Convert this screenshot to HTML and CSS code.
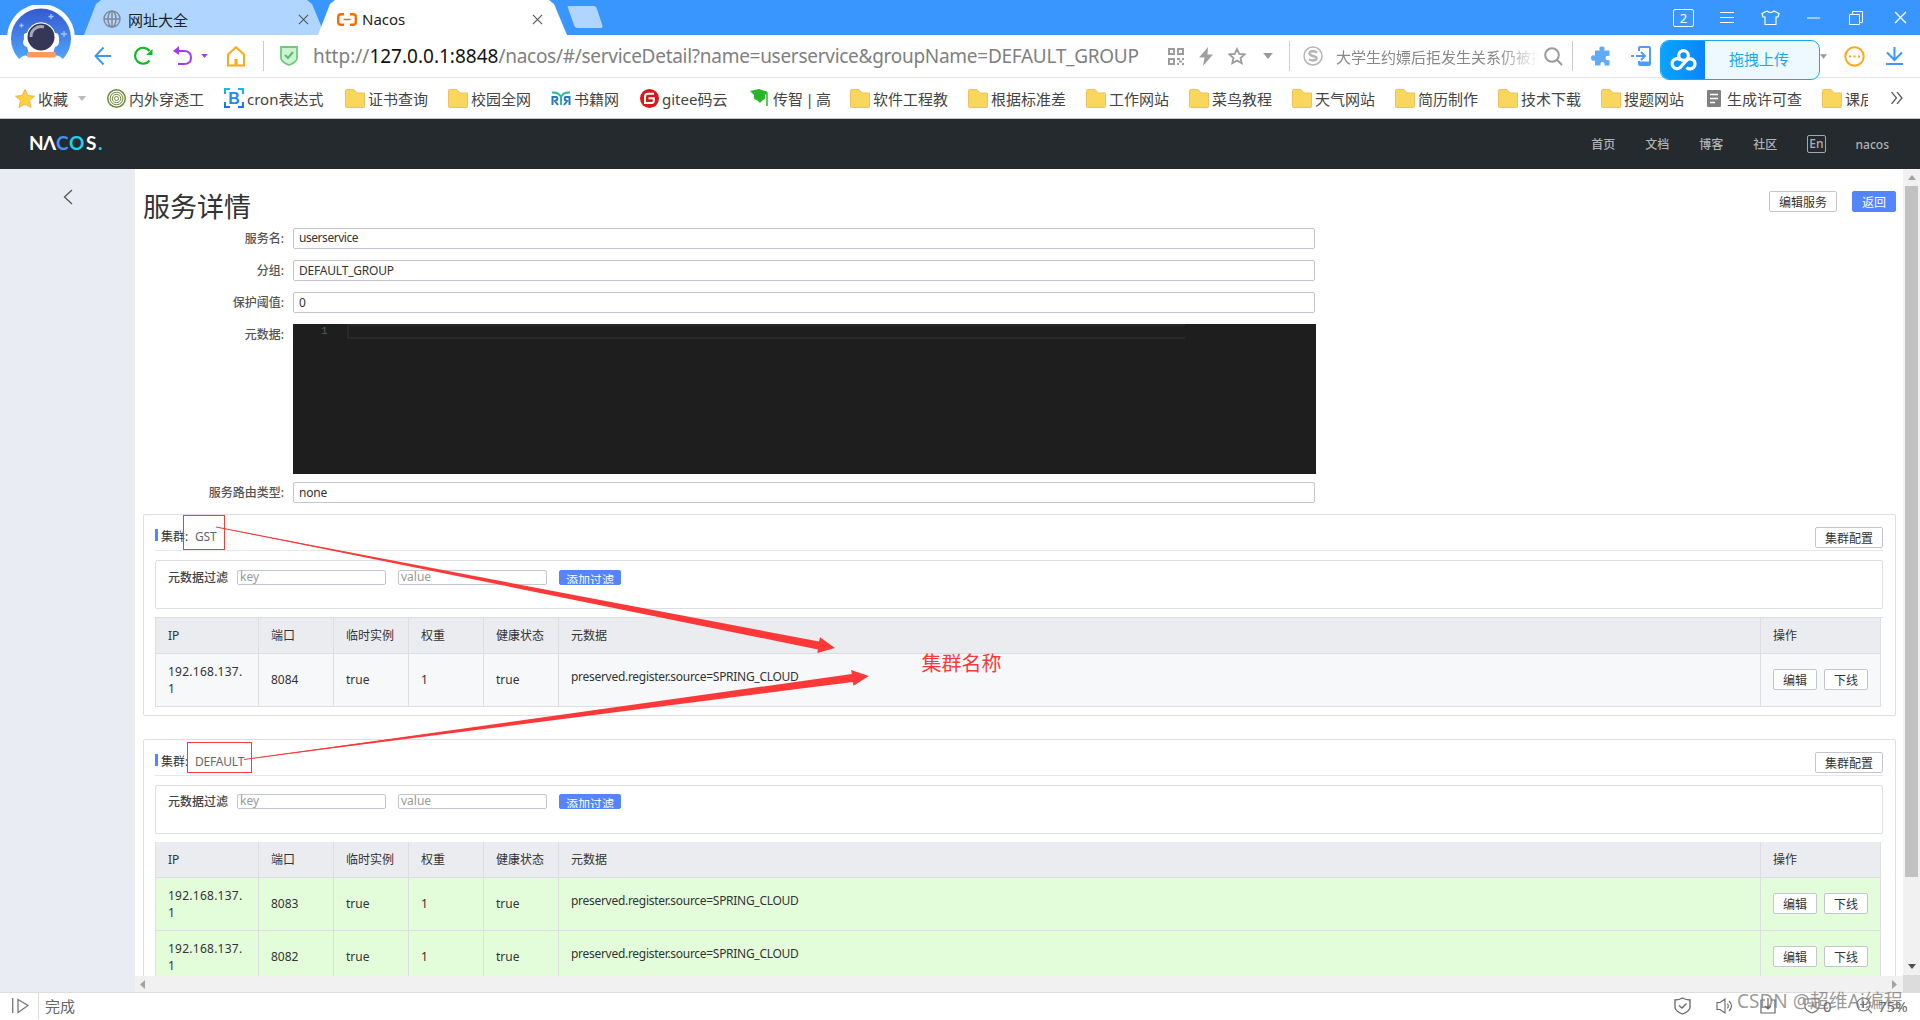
FILE: index.html
```
<!DOCTYPE html>
<html lang="zh">
<head>
    <meta charset="UTF-8">
    <title>Nacos</title>
    <link rel="stylesheet" href="styles.css">
</head>
<body>
    <svg class="defs" width="0" height="0">
        <defs>
            <symbol id="folder" viewBox="0 0 20 19"><path d="M.5 1.5Q.5.5 1.5.5H9l3 3.500H19.500V17.500Q19.500 18.500 18.500 18.500H1.500Q.5 18.500 .5 17.500Z" fill="#f9d65c" stroke="#f3bd62"/></symbol>
            <symbol id="caret" viewBox="0 0 8 5"><path d="M0 0H8L4 5Z" fill="currentColor"/></symbol>
            <symbol id="cross" viewBox="0 0 12 12"><path d="M1 1L11 11M11 1L1 11" stroke="currentColor" stroke-width="1.200" fill="none"/></symbol>
            <linearGradient id="sky" x1="0" y1="0" x2="0" y2="1"><stop offset="0" stop-color="#3558cf"/><stop offset="1" stop-color="#4ea6fb"/></linearGradient>
            <linearGradient id="cronBlue" x1="0" y1="0" x2="0" y2="1"><stop offset="0" stop-color="#19b9f5"/><stop offset="1" stop-color="#1672f0"/></linearGradient>
        </defs>
    </svg>

    <!-- browser chrome -->
    <div class="titlebar">
        <div class="tab">
            <svg width="18" height="18" viewBox="0 0 18 18" fill="none" stroke="#7f8b97" stroke-width="1.500"><circle cx="9" cy="9" r="8"/><ellipse cx="9" cy="9" rx="4" ry="8"/><path d="M9 1V17M1 9H17"/></svg>
            <span>网址大全</span>
            <svg class="close" width="11" height="11"><use href="#cross"/></svg>
        </div>
        <div class="tab active">
            <svg width="20" height="13" viewBox="0 0 20 13" fill="none" stroke="#ff6a00" stroke-width="2.400"><path d="M7 1.200H4Q1.200 1.200 1.200 4V9Q1.200 11.800 4 11.800H7M13 1.200H16Q18.800 1.200 18.800 4V9Q18.800 11.800 16 11.800H13"/><path d="M6.500 6.500H13.500" stroke-width="1.600"/></svg>
            <span>Nacos</span>
            <svg class="close" width="11" height="11"><use href="#cross"/></svg>
        </div>
        <svg class="newtab" width="37" height="23" viewBox="0 0 37 23"><path d="M2 0H27Q29 0 30 3L35.500 20Q36 22 34 22H10Q8 22 7 19L1 2Q0 0 2 0Z" fill="#b0d6ff"/></svg>
        <div class="winbtns">
            <span class="count">2</span>
            <svg width="14" height="12" viewBox="0 0 14 12" stroke="#fff"><path d="M0 .5H14M0 5.500H14M0 10.500H14"/></svg>
            <svg width="19" height="16" viewBox="0 0 19 16" fill="none" stroke="#fff" stroke-width="1.200"><path d="M6 1Q9.500 4 13 1L18 3.500L17 7H15V14.500H4V7H2L1 3.500Z"/></svg>
            <svg width="13" height="2"><path d="M0 1H13" stroke="#fff"/></svg>
            <svg width="14" height="14" viewBox="0 0 14 14" fill="none" stroke="#fff"><path d="M.5 3.500H10.500V13.500H.5ZM3.500 3V.5H13.500V11.500H11"/></svg>
            <svg class="white" width="13" height="13"><use href="#cross"/></svg>
        </div>
    </div>

    <svg class="avatar" width="68" height="60" viewBox="0 0 68 60">
        <path d="M9 56A34 34 0 1 1 59 56Z" fill="#fff"/>
        <path d="M12 54A30 30 0 1 1 56 54Q50 48 46 52H22Q18 48 12 54Z" fill="url(#sky)"/>
        <path d="M17 34Q16 27 20 28A14.500 14.500 0 0 1 48 28Q52 27 52 34V37Q52 41 48 42L46 49H22L20 42Q16 41 16 37Z" fill="#fff"/>
        <circle cx="34" cy="32" r="13.500" fill="#343856"/>
        <path d="M24 32A10 10 0 0 1 37 22" fill="none" stroke="#a7a9bb" stroke-width="3"/>
        <rect x="20" y="47" width="29" height="5.500" rx="2" fill="#ff9a5c"/>
        <path d="M44 9V14M41.500 11.500H46.500M57 26V32M54 29H60M14.500 18.500V22.500M12.500 20.500H16.500" stroke="#a5c6ff" stroke-width="1.300"/>
    </svg>

    <div class="toolbar">
        <svg width="18" height="20" viewBox="0 0 18 20" fill="none" stroke="#3996ff" stroke-width="1.900"><path d="M17 10H1.500M9.500 1.500L1.500 10L9.500 18.500"/></svg>
        <svg width="20" height="20" viewBox="0 0 20 20" fill="none" stroke="#0bbd21" stroke-width="2.200"><path d="M16.500 14.500A8 8 0 1 1 16.500 5"/><path d="M19.500 3V9H13Z" fill="#0bbd21" stroke="none"/></svg>
        <svg width="20" height="20" viewBox="0 0 20 20" fill="none" stroke="#a33cf0" stroke-width="2"><path d="M5 5H11Q18 5 18 11.500Q18 18 11 18H5"/><path d="M0 5L6 0V9Z" fill="#a33cf0" stroke="none"/></svg>
        <svg class="purple" width="7" height="4"><use href="#caret"/></svg>
        <svg width="18" height="21" viewBox="0 0 18 21" fill="none" stroke="#ffa914" stroke-width="2"><path d="M1 8.500L9 1.200L17 8.500V19.500H1Z"/><path d="M9 13V20" stroke-width="3"/></svg>
        <i class="sep"></i>
        <svg width="18" height="20" viewBox="0 0 18 20"><path d="M1 1H17V12Q17 16 9 19Q1 16 1 12Z" fill="#ccf4d2" stroke="#70c97e" stroke-width="1.800"/><path d="M5 9L8 12L13 6" fill="none" stroke="#5dbb6c" stroke-width="2"/></svg>
        <div class="url">http://<b>127.0.0.1:8848</b><span>/nacos/#/serviceDetail?name=userservice&amp;groupName=DEFAULT_GROUP</span></div>
        <svg width="16" height="17" viewBox="0 0 16 17" fill="none" stroke="#9b9b9b" stroke-width="2"><path d="M1 1H6V6H1ZM10 1H15V6H10ZM1 11H6V16H1Z"/><path d="M9 11H12M14 11H16M11 13.500H14M9 16H11M14 16H16"/></svg>
        <svg width="14" height="19" viewBox="0 0 14 19"><path d="M9 0L0 10.500H5.500L4 19L14 7.500H8.500Z" fill="#a0a0a0"/></svg>
        <svg width="18" height="18" viewBox="0 0 18 18"><path d="M9 2L11.200 6.800L16.500 7.300L12.500 11L13.700 16.200L9 13.500L4.300 16.200L5.500 11L1.500 7.300L6.800 6.800Z" fill="none" stroke="#9b9b9b" stroke-width="1.800"/></svg>
        <svg class="grey" width="10" height="6"><use href="#caret"/></svg>
        <i class="sep"></i>
        <svg width="20" height="20" viewBox="0 0 20 20" fill="none" stroke="#b5b5b5"><circle cx="10" cy="10" r="9" stroke-width="1.500"/><path d="M14 6.500Q10 4 7 6Q5.500 9 10 10Q15 11 13 13.500Q10 15.500 6 13.500" stroke-width="2.500"/></svg>
        <div class="query">大学生约嫖后拒发生关系仍被拘</div>
        <svg width="19" height="19" viewBox="0 0 19 19" fill="none" stroke="#999" stroke-width="2"><circle cx="8" cy="8" r="6.800"/><path d="M13 13L18 18"/></svg>
        <i class="sep"></i>
        <svg width="20" height="20" viewBox="0 0 20 20"><path d="M4 4.500H9Q7 .5 11 .5Q15 .5 13 4.500H18.500V10Q14.500 9 14.500 12Q14.500 15 18.500 14V19.500H13.500Q14 16 11.500 16Q9 16 9.500 19.500H4V14.500Q0 15.500 0 12Q0 8.500 4 9.500Z" fill="#61aaf8"/></svg>
        <svg width="20" height="20" viewBox="0 0 20 20" fill="none" stroke="#4c9cfb" stroke-width="2"><path d="M8 5V2Q8 1 9 1H18Q19 1 19 2V18Q19 19 18 19H9Q8 19 8 18V15M0 10H3M5 10H13M10 6L14 10L10 14"/><path d="M8 17H19" stroke-width="3"/></svg>
        <svg class="grey" width="7" height="5"><use href="#caret"/></svg>
        <svg width="21" height="21" viewBox="0 0 21 21"><circle cx="10.500" cy="10.500" r="9.200" fill="#fff" stroke="#ffa61a" stroke-width="2"/><path d="M5 10.500H7M9.500 10.500H11.500M14 10.500H16" stroke="#ffa61a" stroke-width="2"/></svg>
        <svg width="17" height="18" viewBox="0 0 17 18" fill="none" stroke="#3c97fa" stroke-width="2"><path d="M8.500 0V13M1 5.500L8.500 13L16 5.500M0 17H17"/></svg>
    </div>
    <div class="upload">
        <div class="upload-logo"><svg width="27" height="22" viewBox="0 0 27 22" fill="none" stroke="#fff" stroke-width="3.200"><circle cx="13.500" cy="6.500" r="4.800"/><path d="M10.500 11A5 5 0 1 0 11.500 17L16 12A5 5 0 1 1 16.500 18.500"/></svg></div>
        <span>拖拽上传</span>
    </div>

    <div class="bookmarks">
        <div><svg width="20" height="19" viewBox="0 0 20 19"><path d="M10 .5L12.800 6.500L19.500 7.200L14.500 11.500L16 18.500L10 15L4 18.500L5.500 11.500L.5 7.200L7.200 6.500Z" fill="#fbd13f" stroke="#f2b24b"/></svg>收藏</div>
        <div><svg class="lightgrey" width="8" height="5"><use href="#caret"/></svg></div>
        <div><svg width="19" height="19" viewBox="0 0 19 19" fill="none" stroke="#6b8a3c"><circle cx="9.500" cy="9.500" r="8.700" stroke-width="1.500"/><circle cx="9.500" cy="9.500" r="6.300"/><circle cx="9.500" cy="9.500" r="4.200"/><circle cx="9.500" cy="9.500" r="2"/></svg>内外穿透工</div>
        <div><svg width="20" height="20" viewBox="0 0 20 20"><path d="M1 6V1H6M14 1H19V6M19 14V19H14M6 19H1V14" fill="none" stroke="url(#cronBlue)" stroke-width="2"/><text x="10" y="15.500" class="cron-b">B</text></svg>cron表达式</div>
        <div><svg width="20" height="19"><use href="#folder"/></svg>证书查询</div>
        <div><svg width="20" height="19"><use href="#folder"/></svg>校园全网</div>
        <div><svg width="20" height="15" viewBox="0 0 20 15" fill="none" stroke-width="2"><path d="M1.500 14V6H5Q7 6 6 9L4 10L7 14M18.500 14V6H15Q13 6 14 9L16 10L13 14" stroke="#2676c8"/><path d="M1 1.500Q8 1 10 6Q12 1 19 1.500M10 6V14" stroke="#2fb5a0"/></svg>书籍网</div>
        <div><svg width="19" height="19" viewBox="0 0 19 19"><circle cx="9.500" cy="9.500" r="9.500" fill="#d7191d"/><path d="M14 4.800H8Q5 4.800 5 8V14H11.500Q13.800 14 13.800 11.500V9.300H8.500" fill="none" stroke="#fff" stroke-width="2"/></svg>gitee码云</div>
        <div class="narrow"><svg width="20" height="18" viewBox="0 0 20 18"><path d="M0 2L9 0L18 3L15 6V10Q12 11 10 14Q8 11 4 10V6Z" fill="#2cb42c"/><path d="M17 4V17" stroke="#2cb42c" stroke-width="1.500"/></svg>传智 | 高</div>
        <div><svg width="20" height="19"><use href="#folder"/></svg>软件工程教</div>
        <div><svg width="20" height="19"><use href="#folder"/></svg>根据标准差</div>
        <div><svg width="20" height="19"><use href="#folder"/></svg>工作网站</div>
        <div><svg width="20" height="19"><use href="#folder"/></svg>菜鸟教程</div>
        <div><svg width="20" height="19"><use href="#folder"/></svg>天气网站</div>
        <div><svg width="20" height="19"><use href="#folder"/></svg>简历制作</div>
        <div><svg width="20" height="19"><use href="#folder"/></svg>技术下载</div>
        <div><svg width="20" height="19"><use href="#folder"/></svg>搜题网站</div>
        <div><svg width="17" height="17" viewBox="0 0 17 17"><rect width="14" height="17" rx="1" fill="#808080"/><path d="M3 4.500H11M3 8.500H11M3 12.500H8" stroke="#fff" stroke-width="1.300"/></svg>生成许可查</div>
        <div class="cut"><svg width="20" height="19"><use href="#folder"/></svg>课后</div>
        <div><svg width="12" height="12" viewBox="0 0 12 12" fill="none" stroke="#555" stroke-width="1.200"><path d="M.5 0L5.500 6L.5 12M6 0L11 6L6 12"/></svg></div>
    </div>

    <!-- nacos console -->
    <header class="nav">
        <svg class="logo" width="76" height="20" viewBox="0 0 76 20"><text y="16"><tspan x="0">N</tspan><tspan x="14">Λ</tspan><tspan x="27" fill="#4393f7">C</tspan><tspan x="40" fill="#19d4ee">O</tspan><tspan x="57">S</tspan><tspan x="69" fill="#19d4ee">.</tspan></text></svg>
        <nav><a>首页</a><a>文档</a><a>博客</a><a>社区</a><a class="lang">En</a><a>nacos</a></nav>
    </header>

    <div class="main">
        <aside><svg width="10" height="16" viewBox="0 0 10 16"><path d="M9 1L1.500 8L9 15" fill="none" stroke="#555" stroke-width="1.300"/></svg></aside>
        <div class="view">
            <div class="page">
                <div class="page-head">
                    <h1>服务详情</h1>
                    <div class="actions"><button>编辑服务</button><button class="primary">返回</button></div>
                </div>

                <div class="form">
                    <label>服务名:</label><div class="input name">userservice</div>
                    <label>分组:</label><div class="input">DEFAULT_GROUP</div>
                    <label>保护阈值:</label><div class="input">0</div>
                    <label>元数据:</label><div class="editor"><span>1</span><div class="line"></div></div>
                    <label>服务路由类型:</label><div class="input">none</div>
                </div>

                <section class="cluster">
                    <div class="cluster-head">
                        <i></i><strong>集群:</strong><span>GST</span>
                        <button>集群配置</button>
                    </div>
                    <div class="filter">
                        <label>元数据过滤</label>
                        <div class="field">key</div>
                        <div class="field">value</div>
                        <button class="primary">添加过滤</button>
                    </div>
                    <div class="table-wrap">
                        <table>
                            <colgroup><col class="c-ip"><col class="c-sm"><col class="c-sm"><col class="c-sm"><col class="c-sm"><col><col class="c-op"></colgroup>
                            <tr><th>IP</th><th>端口</th><th>临时实例</th><th>权重</th><th>健康状态</th><th>元数据</th><th>操作</th></tr>
                            <tr><td class="ip">192.168.137.<br>1</td><td>8084</td><td>true</td><td>1</td><td>true</td><td class="meta">preserved.register.source=SPRING_CLOUD</td><td class="ops"><button>编辑</button><button>下线</button></td></tr>
                        </table>
                    </div>
                </section>

                <section class="cluster second">
                    <div class="cluster-head">
                        <i></i><strong>集群:</strong><span>DEFAULT</span>
                        <button>集群配置</button>
                    </div>
                    <div class="filter">
                        <label>元数据过滤</label>
                        <div class="field">key</div>
                        <div class="field">value</div>
                        <button class="primary">添加过滤</button>
                    </div>
                    <div class="table-wrap">
                        <table class="healthy">
                            <colgroup><col class="c-ip"><col class="c-sm"><col class="c-sm"><col class="c-sm"><col class="c-sm"><col><col class="c-op"></colgroup>
                            <tr><th>IP</th><th>端口</th><th>临时实例</th><th>权重</th><th>健康状态</th><th>元数据</th><th>操作</th></tr>
                            <tr><td class="ip">192.168.137.<br>1</td><td>8083</td><td>true</td><td>1</td><td>true</td><td class="meta">preserved.register.source=SPRING_CLOUD</td><td class="ops"><button>编辑</button><button>下线</button></td></tr>
                            <tr><td class="ip">192.168.137.<br>1</td><td>8082</td><td>true</td><td>1</td><td>true</td><td class="meta">preserved.register.source=SPRING_CLOUD</td><td class="ops"><button>编辑</button><button>下线</button></td></tr>
                        </table>
                    </div>
                </section>
            </div>
            <div class="hscroll">
                <svg width="5" height="9"><path d="M5 0V9L0 4.500Z" fill="#a3a3a3"/></svg>
                <svg width="5" height="9"><path d="M0 0V9L5 4.500Z" fill="#a3a3a3"/></svg>
            </div>
        </div>
        <div class="vscroll">
            <svg width="8" height="5"><path d="M0 5H8L4 0Z" fill="#a3a3a3"/></svg>
            <div class="thumb"></div>
            <svg class="down" width="8" height="5"><use href="#caret"/></svg>
            <div class="corner"></div>
        </div>
    </div>

    <footer class="status">
        <svg width="17" height="16" viewBox="0 0 17 16" fill="none" stroke="#777"><path d="M.7 0V15M6 1.500L16 7.500L6 14.500Z" stroke-width="1.300"/></svg>
        <i></i>
        <span>完成</span>
        <div class="status-icons">
            <svg width="17" height="18" viewBox="0 0 17 18" fill="none" stroke="#666" stroke-width="1.300"><path d="M8.500 1Q12 3 16 3V10Q16 14 8.500 17Q1 14 1 10V3Q5 3 8.500 1Z"/><path d="M5 8.500L8 11L12.500 6.500"/></svg>
            <svg width="17" height="16" viewBox="0 0 17 16" fill="none" stroke="#666" stroke-width="1.100"><path d="M1 4.500H4L9 1V15L4 11.500H1ZM11.500 5.500Q13 8 11.500 10.500M13 3Q18 8 13 13"/></svg>
            <svg width="16" height="16" viewBox="0 0 16 16" fill="none" stroke="#666" stroke-width="1.200"><path d="M5 2H1V15H15V2H11M8 0V11M5 8L8 11L11 8"/></svg>
            <svg width="16" height="17" viewBox="0 0 16 17" fill="none" stroke="#777" stroke-width="1.100"><path d="M1 2H15V10Q14 14 8 16Q2 14 1 10ZM4 6H7M4 9H7M9 5V10M12 5V10"/></svg>
            <span>0</span>
            <svg width="16" height="17" viewBox="0 0 16 17" fill="none" stroke="#777" stroke-width="1.200"><circle cx="7.500" cy="7.500" r="6.500"/><path d="M12 12L16 16M4 7.500H11M7.500 4V11"/></svg>
            <span>75%</span>
        </div>
    </footer>

    <!-- annotations -->
    <svg class="notes" width="1920" height="1020" fill="none" stroke="#fc3838">
        <rect x="183.500" y="515.500" width="41" height="34"/>
        <rect x="187.500" y="742.500" width="64" height="30"/>
        <path d="M216 527L819 641.500L820 637.300L835 648L817.300 653L818 649.500Z" fill="#fc3838" stroke="none"/>
        <path d="M244 759.500L851.800 674L851 670L868.800 676L853.500 685.700L852.800 682Z" fill="#fc3838" stroke="none"/>
        <path d="M216 527L420 567M244 759.500L450 731.500"/>
        <text class="note-text" x="921.500" y="671">集群名称</text>
    </svg>
    <div class="watermark">CSDN @超维Ai编程</div>
</body>
</html>
```

FILE: styles.css
```
* {
    box-sizing: border-box;
}

body {
    margin: 0;
    width: 1920px;
    height: 1020px;
    overflow: hidden;
    position: relative;
    display: flex;
    flex-direction: column;
    font-family: "Noto Sans", "Noto Sans CJK SC", sans-serif;
    font-size: 12px;
    color: #333;
    background: #fff;
}

svg {
    display: block;
    flex: none;
}

.defs {
    position: absolute;
}

/* title bar */
.titlebar {
    height: 35px;
    background: #3996ff;
    display: flex;
    padding-left: 84px;
}

.tab {
    width: 241px;
    height: 35px;
    margin-right: -7px;
    padding: 3px 16px 0 19px;
    display: flex;
    align-items: center;
    gap: 7px;
    font-size: 15px;
    color: #222;
    background: #b0d6ff;
    clip-path: polygon(0 100%, 12px 4px, 17px 0, calc(100% - 18px) 0, calc(100% - 13px) 4px, 100% 100%);
}

.tab.active {
    width: 249px;
    background: #fff;
    margin-right: 0;
    padding-right: 24px;
    gap: 5px;
}

.tab .close {
    margin-left: auto;
    color: #555;
}

.newtab {
    margin: 6px 0 0 0;
}

.winbtns {
    margin-left: auto;
    display: grid;
    grid-template-columns: 47px 41px 46px 42px 45px 24px;
    align-items: center;
    width: 247px;
}

.count {
    width: 21px;
    height: 18px;
    border: 1px solid #fff;
    border-radius: 2px;
    color: #fff;
    font-size: 13px;
    line-height: 16px;
    text-align: center;
}

.white {
    color: #fff;
}

.avatar {
    position: absolute;
    left: 7px;
    top: 5px;
}

/* address bar */
.toolbar {
    height: 43px;
    border-bottom: 1px solid #e5e5e5;
    display: grid;
    grid-template-columns: 39px 40px 28px 26px 36px 17px 33px 855px 31px 29px 35px 26px 14px 33px 208px 28px 19px 40px 189px 24px 42px 20px;
    align-items: center;
    padding-left: 94px;
}

.sep {
    width: 1px;
    height: 30px;
    background: #ccc;
}

.purple { color: #a33cf0; }
.grey { color: #999; }
.lightgrey { color: #bbb; }

.url {
    font-size: 19px;
    color: #808080;
    white-space: nowrap;
}

.url b {
    font-weight: normal;
    color: #111;
}

.url span {
    letter-spacing: -0.28px;
}

.query {
    width: 203px;
    overflow: hidden;
    white-space: nowrap;
    font-size: 15px;
    color: #888;
    -webkit-mask-image: linear-gradient(90deg, #000 80%, transparent);
}

.upload {
    position: absolute;
    left: 1660px;
    top: 40px;
    width: 160px;
    height: 40px;
    border: 1.5px solid #13a8fb;
    border-radius: 9px;
    background: #eef9ff;
    overflow: hidden;
    display: flex;
    align-items: center;
    font-size: 15px;
    color: #13a8fb;
}

.upload span {
    margin-top: -3px;
}

.upload-logo {
    width: 44px;
    height: 40px;
    margin-right: 24px;
    background: linear-gradient(90deg, #09a4ff, #0a85ff);
    display: flex;
    align-items: center;
    justify-content: center;
}

/* bookmarks */
.bookmarks {
    height: 41px;
    border-bottom: 1px solid #c4c6c8;
    padding-left: 15px;
    display: grid;
    grid-template-columns: 63px 29px 117px 121px 103px 103px 89px 110px 100px 118px 118px 103px 103px 103px 103px 103px 106px 115px 69px 20px;
    align-items: center;
    font-size: 15px;
    color: #444;
}

.bookmarks div {
    display: flex;
    align-items: center;
    gap: 3px;
    white-space: nowrap;
}

.bookmarks .cut {
    width: 46px;
    overflow: hidden;
}

.bookmarks .narrow {
    word-spacing: -1.5px;
}

.cron-b {
    font: bold 16px "Liberation Sans", sans-serif;
    fill: #1b8cf2;
    text-anchor: middle;
}

/* nacos top bar */
.nav {
    height: 50px;
    background: #252a2f;
    display: flex;
    align-items: center;
    justify-content: space-between;
    padding: 0 31px 0 29px;
}

.logo text {
    font: bold 19px Lato, sans-serif;
    fill: #fff;
}

.nav nav {
    display: flex;
    align-items: center;
    gap: 30px;
    font-weight: 500;
    color: #b0b2b4;
}

.nav .lang {
    border: 1px solid #a5a7a9;
    border-radius: 2px;
    padding: 0 1px;
    height: 18px;
    line-height: 16px;
}

/* content */
.main {
    height: 823px;
    display: flex;
}

aside {
    width: 135px;
    background: #e9edf3;
    padding: 20px 0 0 63px;
}

.view {
    width: 1768px;
}

.page {
    height: 807px;
    padding: 0 7px 0 8px;
    overflow: hidden;
}

.page-head {
    height: 59px;
    display: flex;
    justify-content: space-between;
}

h1 {
    margin: 18px 0 0;
    font-size: 27px;
    line-height: 40px;
    font-weight: normal;
    color: #333;
}

.actions {
    display: flex;
    gap: 15px;
    padding-top: 22px;
}

button {
    height: 21px;
    padding: 1px 9px 0;
    font-family: inherit;
    font-size: 12px;
    line-height: 19px;
    color: #333;
    background: #fff;
    border: 1px solid #c4c6cf;
    border-radius: 2px;
    white-space: nowrap;
}

button.primary {
    color: #fff;
    background: #5584ff;
    border-color: #5584ff;
}

.form {
    display: grid;
    grid-template-columns: 141px 1023px;
    column-gap: 9px;
    grid-template-rows: 32px 32px 32px 158px 21px;
}

.form label {
    text-align: right;
    font-weight: 500;
    color: #555;
    line-height: 22px;
}

.input {
    width: 1022px;
    height: 21px;
    border: 1px solid #c4c6cf;
    border-radius: 2px;
    padding-left: 5px;
    line-height: 20px;
    letter-spacing: -0.2px;
}

.input.name {
    line-height: 18px;
    letter-spacing: -0.45px;
}

.editor {
    height: 150px;
    background: #1e1e1e;
    display: flex;
    font-family: "Liberation Mono", monospace;
    font-size: 11px;
    line-height: 15px;
    color: #5a5a5a;
}

.editor span {
    width: 54px;
    padding-left: 28px;
}

.editor .line {
    width: 838px;
    height: 15px;
    border: 2px solid #282828;
    border-right: none;
}

.cluster {
    height: 202px;
    margin-top: 11px;
    border: 1px solid #dcdee3;
    border-radius: 2px;
    padding: 12px 12px 0 11px;
}

.cluster.second {
    height: 300px;
    margin-top: 23px;
}

.cluster-head {
    height: 24px;
    border-bottom: 1px solid #e6e7eb;
    display: flex;
    align-items: flex-start;
    line-height: 19px;
}

.cluster-head i {
    width: 3px;
    height: 12px;
    margin: 2px 3px 0 0;
    background: #5584ff;
}

.cluster-head strong {
    font-weight: normal;
    width: 34px;
}

.cluster-head span {
    color: #666;
    letter-spacing: -0.2px;
}

.cluster-head button {
    margin-left: auto;
}

.filter {
    height: 49px;
    margin-top: 9px;
    border: 1px solid #dcdee3;
    border-radius: 2px;
    display: flex;
    align-items: flex-start;
    padding: 9px 12px 0;
    line-height: 15px;
}

.filter label {
    width: 69px;
    font-weight: 500;
    color: #444;
}

.field {
    width: 149px;
    height: 15px;
    margin-right: 12px;
    border: 1px solid #c4c6cf;
    border-radius: 2px;
    padding-left: 2px;
    line-height: 12px;
    color: #999;
}

.filter button {
    height: 15px;
    line-height: 17px;
    padding: 1px 6px 0;
    overflow: hidden;
}

.table-wrap {
    margin-top: 8px;
    border-top: 1px solid #dcdee3;
}

.second .filter {
    padding-top: 8px;
}

.second .table-wrap {
    border-top: none;
}

table {
    width: 1726px;
    table-layout: fixed;
    border-collapse: separate;
    border-spacing: 0;
}

.c-ip { width: 104px; }
.c-sm { width: 75px; }
.c-op { width: 120px; }

th, td {
    border: solid #dcdee3;
    border-width: 0 1px 1px 0;
    padding: 0 0 0 12px;
    text-align: left;
    font-weight: normal;
    line-height: 17px;
}

th:first-child, td:first-child {
    border-left-width: 1px;
}

th {
    height: 36px;
    background: #ebecf0;
}

td {
    height: 53px;
    padding-bottom: 2px;
    background: #f7f8fa;
}

.healthy td {
    background: #e3fddb;
}

td.ip {
    padding-bottom: 0;
    letter-spacing: 0.25px;
}

td.meta {
    padding-bottom: 7px;
    letter-spacing: -0.29px;
}

.ops button {
    width: 44px;
    margin-right: 7px;
}

/* scrollbars */
.hscroll {
    height: 16px;
    background: #f1f1f1;
    display: flex;
    justify-content: space-between;
    align-items: center;
    padding: 0 6px 0 5px;
}

.vscroll {
    width: 17px;
    background: #f1f1f1;
    display: flex;
    flex-direction: column;
    align-items: center;
    padding-top: 6px;
}

.thumb {
    width: 13px;
    height: 692px;
    margin-top: 6px;
    background: #c1c1c1;
}

.down {
    margin: 87px 0 6px;
    color: #505050;
}

.corner {
    width: 17px;
    height: 17px;
    background: #dcdcdc;
}

/* status bar */
.status {
    height: 28px;
    border-top: 1px solid #ddd;
    display: flex;
    align-items: center;
    padding: 0 0 2px 12px;
    font-size: 15px;
    color: #666;
}

.status > i {
    width: 1px;
    height: 27px;
    margin: 0 6px 0 9px;
    background: #ddd;
}

.status-icons {
    margin-left: auto;
    width: 246px;
    display: grid;
    grid-template-columns: 42px 44px 44px 19px 33px 22px 40px;
    align-items: center;
}

/* overlay */
.notes {
    position: absolute;
    left: 0;
    top: 0;
    pointer-events: none;
}

.note-text {
    font: 20px "Noto Sans CJK SC", sans-serif;
    fill: #fc3838;
    stroke: none;
}

.watermark {
    position: absolute;
    left: 1737px;
    top: 986px;
    font-size: 19px;
    line-height: 30px;
    color: rgba(120, 120, 120, 0.75);
    white-space: nowrap;
}
```
